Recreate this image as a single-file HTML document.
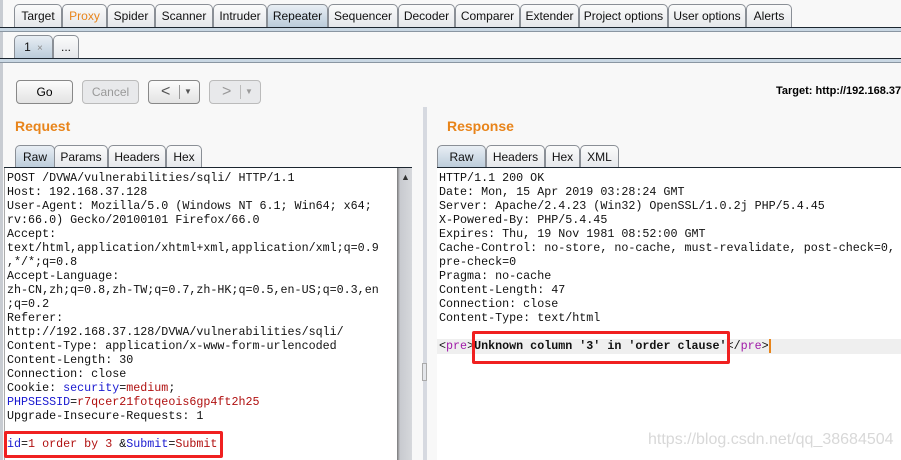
<!DOCTYPE html>
<html><head><meta charset="utf-8"><style>
*{margin:0;padding:0;box-sizing:border-box}
body{width:901px;height:460px;overflow:hidden;background:#f8f8f8;font-family:"Liberation Sans",sans-serif;position:relative}
.a{position:absolute}
.tab{position:absolute;height:24px;border:1px solid #8a8f96;border-bottom:none;border-radius:5px 5px 0 0;background:linear-gradient(#fbfbfb,#e4e6ea);font-size:12px;color:#111;text-align:center;line-height:22px}
.sel{background:linear-gradient(#e8eef4,#b9cad9)}
.line{position:absolute;left:0;right:0;height:1px;background:#1c2630}
.band{position:absolute;left:0;right:0;background:#c9d7e3}
.btn{position:absolute;top:80px;height:24px;border:1px solid #888;border-radius:4px;background:linear-gradient(#fcfcfc,#e3e3e3);font-size:12px;text-align:center;line-height:22px}
.dis{border-color:#bbb;color:#999;background:#e8e9eb}
.mono{font-family:"Liberation Mono",monospace;font-size:11.7px;line-height:14px;white-space:pre;color:#111}
.b{color:#1a1ad0}.r{color:#b01010}.p{color:#a01aa8}
h2{position:absolute;font-size:14px;color:#e8841a;font-weight:bold}
</style></head><body>
<div class="a" style="left:0;top:0;width:3px;height:460px;background:#c8ccd2"></div>
<div class="tab" style="left:14px;top:4px;width:48px">Target</div>
<div class="tab" style="left:62px;top:4px;width:45px;color:#e8841a">Proxy</div>
<div class="tab" style="left:107px;top:4px;width:48px">Spider</div>
<div class="tab" style="left:155px;top:4px;width:58px">Scanner</div>
<div class="tab" style="left:213px;top:4px;width:54px">Intruder</div>
<div class="tab sel" style="left:267px;top:4px;width:61px">Repeater</div>
<div class="tab" style="left:328px;top:4px;width:70px">Sequencer</div>
<div class="tab" style="left:398px;top:4px;width:57px">Decoder</div>
<div class="tab" style="left:455px;top:4px;width:65px">Comparer</div>
<div class="tab" style="left:520px;top:4px;width:59px">Extender</div>
<div class="tab" style="left:579px;top:4px;width:89px">Project options</div>
<div class="tab" style="left:668px;top:4px;width:78px">User options</div>
<div class="tab" style="left:746px;top:4px;width:46px">Alerts</div>
<div class="line" style="top:27px"></div><div class="band" style="top:28px;height:3px"></div><div class="line" style="top:31px;background:#8a96a2"></div>
<div class="tab sel" style="left:14px;top:35px;width:39px">1 <span style="color:#888;font-size:10px">&nbsp;×</span></div>
<div class="tab" style="left:53px;top:35px;width:26px">...</div>
<div class="line" style="top:58px"></div><div class="band" style="top:59px;height:3px"></div><div class="line" style="top:62px;background:#8a96a2"></div>
<div class="btn" style="left:16px;width:57px">Go</div>
<div class="btn dis" style="left:82px;width:57px">Cancel</div>
<div class="btn" style="left:148px;width:52px;font-size:16px;color:#555;text-align:left;padding-left:12px">&lt;<span style="position:absolute;left:30px;top:4px;height:14px;border-left:1px solid #999"></span><span style="position:absolute;left:35px;font-size:8px">▼</span></div>
<div class="btn dis" style="left:209px;width:52px;font-size:16px;text-align:left;padding-left:12px">&gt;<span style="position:absolute;left:30px;top:4px;height:14px;border-left:1px solid #bbb"></span><span style="position:absolute;left:35px;font-size:8px">▼</span></div>
<div class="a" style="left:776px;top:85px;font-size:11px;font-weight:bold;white-space:nowrap">Target: http://192.168.37.128</div>
<h2 style="left:15px;top:118px">Request</h2>
<h2 style="left:447px;top:118px">Response</h2>
<div class="tab sel" style="left:15px;top:145px;width:40px">Raw</div>
<div class="tab" style="left:54px;top:145px;width:54px">Params</div>
<div class="tab" style="left:108px;top:145px;width:58px">Headers</div>
<div class="tab" style="left:166px;top:145px;width:36px">Hex</div>
<div class="a" style="left:4px;top:167px;width:408px;height:1px;background:#1c2630"></div>
<div class="a" style="left:4px;top:168px;width:408px;height:292px;background:#fff;border-left:1px solid #aaa"></div>
<div class="a" style="left:397px;top:168px;width:15px;height:292px;background:linear-gradient(90deg,#777,#c8cacf 20%,#d6d8dc)"></div>
<div class="a" style="left:401px;top:172px;font-size:9px;color:#333">▲</div>
<div class="a" style="left:423px;top:107px;width:4px;height:353px;background:#d6d9e0"></div>
<div class="a" style="left:422px;top:363px;width:5px;height:18px;border:1px solid #aaa;background:#e4e6ea"></div>
<div class="tab sel" style="left:437px;top:145px;width:49px">Raw</div>
<div class="tab" style="left:486px;top:145px;width:59px">Headers</div>
<div class="tab" style="left:545px;top:145px;width:35px">Hex</div>
<div class="tab" style="left:580px;top:145px;width:39px">XML</div>
<div class="a" style="left:437px;top:167px;width:464px;height:1px;background:#1c2630"></div>
<div class="a" style="left:437px;top:168px;width:464px;height:292px;background:#fff"></div>
<div class="a mono" style="left:7px;top:171px">POST /DVWA/vulnerabilities/sqli/ HTTP/1.1
Host: 192.168.37.128
User-Agent: Mozilla/5.0 (Windows NT 6.1; Win64; x64;
rv:66.0) Gecko/20100101 Firefox/66.0
Accept:
text/html,application/xhtml+xml,application/xml;q=0.9
,*/*;q=0.8
Accept-Language:
zh-CN,zh;q=0.8,zh-TW;q=0.7,zh-HK;q=0.5,en-US;q=0.3,en
;q=0.2
Referer:
http://192.168.37.128/DVWA/vulnerabilities/sqli/
Content-Type: application/x-www-form-urlencoded
Content-Length: 30
Connection: close
Cookie: <span class="b">security</span>=<span class="r">medium</span>;
<span class="b">PHPSESSID</span>=<span class="r">r7qcer21fotqeois6gp4ft2h25</span>
Upgrade-Insecure-Requests: 1

<span class="b">id</span>=<span class="r">1 order by 3 </span>&amp;<span class="b">Submit</span>=<span class="r">Submit</span></div>
<div class="a" style="left:437px;top:339px;width:464px;height:15px;background:#efefef"></div>
<div class="a mono" style="left:439px;top:171px">HTTP/1.1 200 OK
Date: Mon, 15 Apr 2019 03:28:24 GMT
Server: Apache/2.4.23 (Win32) OpenSSL/1.0.2j PHP/5.4.45
X-Powered-By: PHP/5.4.45
Expires: Thu, 19 Nov 1981 08:52:00 GMT
Cache-Control: no-store, no-cache, must-revalidate, post-check=0,
pre-check=0
Pragma: no-cache
Content-Length: 47
Connection: close
Content-Type: text/html

&lt;<span class="p">pre</span>&gt;<b>Unknown column '3' in 'order clause'</b>&lt;/<span class="p">pre</span>&gt;<span style="border-left:2px solid #e8841a"></span></div>
<div class="a" style="left:4px;top:431px;width:219px;height:27px;border:3px solid #f02020;border-radius:2px"></div>
<div class="a" style="left:472px;top:331px;width:258px;height:33px;border:3px solid #f02020;border-radius:2px"></div>
<div class="a" style="left:648px;top:431px;font-size:16px;color:#d8d8d8">https://blog.csdn.net/qq_38684504</div>
</body></html>
